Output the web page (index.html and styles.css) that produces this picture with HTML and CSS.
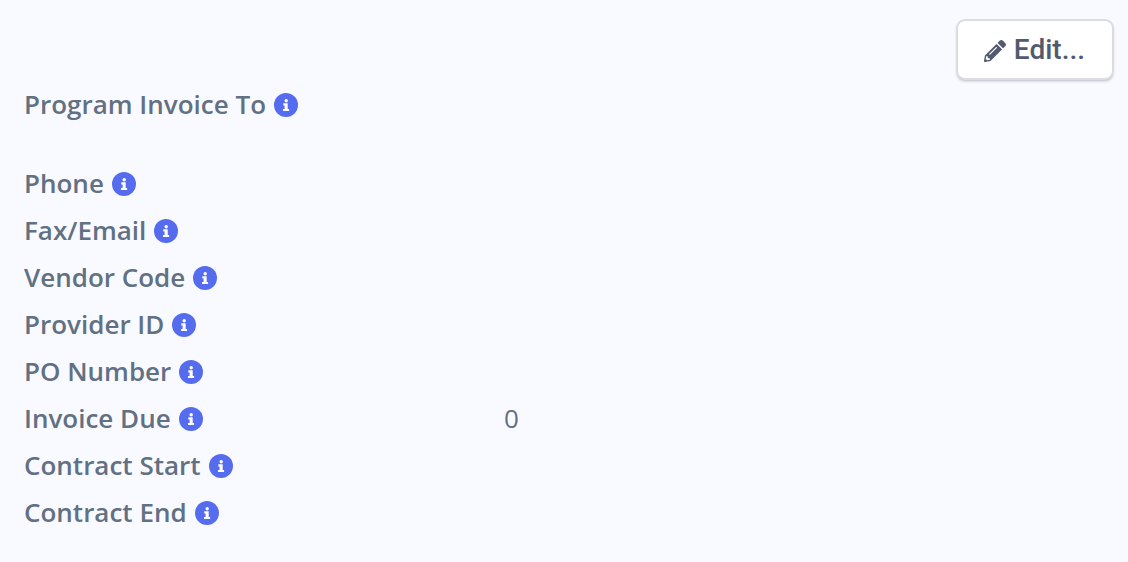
FILE: index.html
```html
<!DOCTYPE html>
<html lang="en">
<head>
<meta charset="utf-8">
<title>Program Invoice</title>
<link rel="stylesheet" href="styles.css">
</head>
<body>
<svg class="sprite" aria-hidden="true">
  <symbol id="info" viewBox="0 0 24 24"><circle cx="12" cy="12" r="12"/><g fill="#fff"><circle cx="12.2" cy="7.7" r="1.7"/><path d="M9.3 10.2h4.4v5.7h1.4v2.2H9v-2.2h1.6v-3.5H9.3z"/></g></symbol>
</svg>
<main class="panel">
  <header class="toolbar">
    <button class="edit" type="button">
      <svg class="pencil" viewBox="0 0 512 512" aria-hidden="true"><path d="M497.9 142.1l-46.1 46.1c-4.7 4.7-12.3 4.7-17 0l-111-111c-4.7-4.7-4.7-12.3 0-17l46.1-46.1c18.7-18.7 49.1-18.7 67.9 0l60.1 60.1c18.8 18.7 18.8 49.1 0 67.9zM284.2 99.8L21.6 362.4.4 483.9c-2.9 16.4 11.4 30.6 27.8 27.8l121.5-21.3 262.6-262.6c4.7-4.7 4.7-12.3 0-17l-111-111c-4.8-4.7-12.4-4.7-17.1 0zM124.1 339.9c-5.5-5.5-5.5-14.3 0-19.8l154-154c5.5-5.5 14.3-5.5 19.8 0s5.5 14.3 0 19.8l-154 154c-5.5 5.5-14.3 5.5-19.8 0zM88 424h48v36.3l-64.5 11.3-31.1-31.1L51.7 376H88v48z"/></svg>
      <span>Edit...</span>
    </button>
  </header>
  <dl class="fields">
    <div class="row row-first"><dt class="label">Program Invoice To <svg class="info"><use href="#info"/></svg></dt><dd class="value"></dd></div>
    <div class="row"><dt class="label">Phone <svg class="info"><use href="#info"/></svg></dt><dd class="value"></dd></div>
    <div class="row"><dt class="label">Fax/Email <svg class="info"><use href="#info"/></svg></dt><dd class="value"></dd></div>
    <div class="row"><dt class="label">Vendor Code <svg class="info"><use href="#info"/></svg></dt><dd class="value"></dd></div>
    <div class="row"><dt class="label">Provider ID <svg class="info"><use href="#info"/></svg></dt><dd class="value"></dd></div>
    <div class="row"><dt class="label">PO Number <svg class="info"><use href="#info"/></svg></dt><dd class="value"></dd></div>
    <div class="row"><dt class="label">Invoice Due <svg class="info"><use href="#info"/></svg></dt><dd class="value">0</dd></div>
    <div class="row"><dt class="label">Contract Start <svg class="info"><use href="#info"/></svg></dt><dd class="value"></dd></div>
    <div class="row"><dt class="label">Contract End <svg class="info"><use href="#info"/></svg></dt><dd class="value"></dd></div>
  </dl>
</main>
</body>
</html>
```
FILE: styles.css
```css
* {
  box-sizing: border-box;
}

body {
  margin: 0;
  background: #f9faff;
  color: #627083;
  font-family: "Open Sans", sans-serif;
  font-size: 26px;
  line-height: 47px;
}

.sprite {
  position: absolute;
  width: 0;
  height: 0;
}

.panel {
  padding: 20px 15px 24px 24px;
}

.toolbar {
  display: flex;
  justify-content: flex-end;
  margin-bottom: 2px;
}

.edit {
  display: flex;
  align-items: center;
  gap: 8px;
  padding: 11px 27px 11px 26px;
  border: 1px solid #d9dae3;
  border-radius: 8px;
  background: #fff;
  box-shadow: 0 0 0 1px #dcdde5, 0 2px 3px rgba(60, 66, 87, 0.35);
  color: #525b6e;
  font-family: Roboto, sans-serif;
  font-size: 28px;
  font-weight: 500;
  line-height: 35px;
}

.pencil {
  width: 22px;
  height: 22px;
  margin-top: 3px;
  fill: currentColor;
}

.fields {
  margin: 0;
}

.row {
  display: grid;
  grid-template-columns: 480px 1fr;
}

.row-first {
  margin-bottom: 32px;
}

.label {
  display: flex;
  align-items: center;
  gap: 8px;
  font-weight: 600;
}

.value {
  margin: 0;
}

.info {
  width: 24px;
  height: 24px;
  fill: #556cee;
}
```
